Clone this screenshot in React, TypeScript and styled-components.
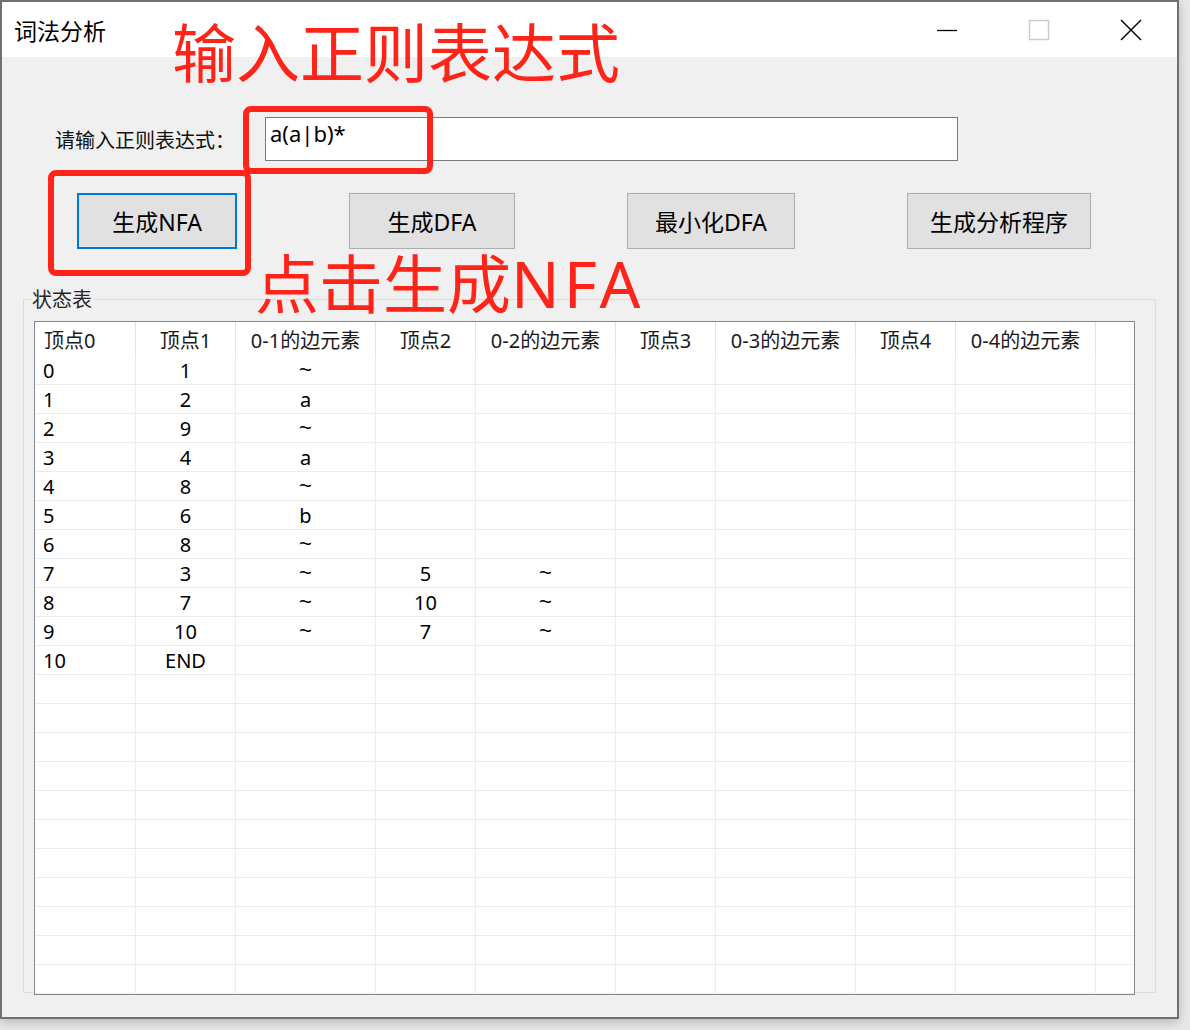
import React from 'react';
import styled, { createGlobalStyle } from 'styled-components';

const GlobalStyle = createGlobalStyle`
  html, body {
    margin: 0;
    padding: 0;
    background: #e8e8e8;
  }
  body {
    width: 1190px;
    height: 1030px;
    overflow: hidden;
    font-family: "Noto Sans", "Noto Sans CJK SC", sans-serif;
  }
`;

const RED = '#ff2318';

const Screen = styled.div`
  position: relative;
  width: 1190px;
  height: 1030px;
`;

const Window = styled.div`
  width: 1179px;
  height: 1019px;
  box-sizing: border-box;
  border: 2px solid #707070;
  background: #f0f0f0;
  display: flex;
  flex-direction: column;
  box-shadow: 0 3px 10px rgba(0, 0, 0, 0.22);
`;

const TitleBar = styled.div`
  height: 55px;
  flex-shrink: 0;
  background: #ffffff;
  display: flex;
  align-items: center;
`;

const Title = styled.div`
  flex: 1;
  padding-left: 12px;
  font-size: 23px;
  color: #000;
  font-family: "Noto Sans CJK SC", sans-serif;
`;

const CaptionButton = styled.div`
  width: 92px;
  height: 55px;
  display: flex;
  align-items: center;
  justify-content: center;
`;

const Body = styled.div`
  flex: 1;
  display: flex;
  flex-direction: column;
  padding: 60px 21px 0 21px;
`;

const FormRow = styled.div`
  display: flex;
  align-items: center;
  margin-left: 32px;
`;

const FieldLabel = styled.div`
  width: 210px;
  font-size: 20px;
  color: #111;
  font-family: "Noto Sans CJK SC", sans-serif;
`;

const TextBox = styled.div`
  width: 693px;
  height: 44px;
  box-sizing: border-box;
  border: 1px solid #7a7a7a;
  background: #ffffff;
  padding: 2px 4px;
  font-size: 22px;
  line-height: 27px;
  color: #000;
`;

const ButtonRow = styled.div`
  display: flex;
  gap: 112px;
  margin-top: 32px;
  margin-left: 54px;
`;

const WinButton = styled.div<{ $width: number; $focused?: boolean }>`
  width: ${(p) => p.$width}px;
  height: 56px;
  box-sizing: border-box;
  border: ${(p) => (p.$focused ? '2px solid #0078d7' : '1px solid #adadad')};
  background: #e1e1e1;
  display: flex;
  align-items: center;
  justify-content: center;
  font-size: 23px;
  color: #000;
`;

const GroupBox = styled.fieldset`
  margin: 40px 0 0 0;
  border: 1px solid #dcdcdc;
  padding: 12px 20px 0 10px;
  min-width: 0;
`;

const GroupLegend = styled.legend`
  font-size: 20px;
  line-height: 20px;
  padding: 0 1px;
  margin-left: -3px;
  color: #262626;
  font-family: "Noto Sans CJK SC", sans-serif;
`;

const Grid = styled.div`
  width: 1101px;
  box-sizing: border-box;
  border: 1px solid #828790;
  background: #ffffff;
  display: grid;
  grid-template-columns: 101px 100px 140px 100px 140px 100px 140px 100px 140px 1fr;
  margin-bottom: -3px;
`;

const HeadCell = styled.div<{ $align: 'left' | 'center'; $filler?: boolean }>`
  height: 34px;
  box-sizing: border-box;
  border-right: ${(p) => (p.$filler ? 'none' : '1px solid #e3e3e3')};
  display: flex;
  align-items: center;
  justify-content: ${(p) => (p.$align === 'left' ? 'flex-start' : 'center')};
  padding-left: ${(p) => (p.$align === 'left' ? '9px' : '0')};
  font-size: 20px;
  color: #1a1a1a;
  white-space: nowrap;
`;

const Cell = styled.div<{ $align: 'left' | 'center'; $filler?: boolean; $symbol?: boolean }>`
  height: 29px;
  box-sizing: border-box;
  border-right: ${(p) => (p.$filler ? 'none' : '1px solid #ececec')};
  border-bottom: 1px solid #ececec;
  display: flex;
  align-items: center;
  justify-content: ${(p) => (p.$align === 'left' ? 'flex-start' : 'center')};
  padding-left: ${(p) => (p.$align === 'left' ? '8px' : '0')};
  font-size: ${(p) => (p.$symbol ? '22px' : '20px')};
  font-family: ${(p) =>
    p.$symbol ? '"Liberation Sans", sans-serif' : '"Noto Sans", "Noto Sans CJK SC", sans-serif'};
  color: #000;
  white-space: nowrap;
`;

const AnnotationText = styled.div<{ $left: number; $top: number }>`
  position: absolute;
  left: ${(p) => p.$left}px;
  top: ${(p) => p.$top}px;
  font-size: 64px;
  line-height: 64px;
  color: ${RED};
  font-family: "Noto Sans", "Noto Sans CJK SC", sans-serif;
  white-space: nowrap;
`;

const LatinPart = styled.span`
  letter-spacing: 4px;
`;

const AnnotationBox = styled.div<{ $left: number; $top: number; $w: number; $h: number }>`
  position: absolute;
  left: ${(p) => p.$left}px;
  top: ${(p) => p.$top}px;
  width: ${(p) => p.$w}px;
  height: ${(p) => p.$h}px;
  box-sizing: border-box;
  border: 6px solid ${RED};
  border-radius: 8px;
`;

const headers = [
  '顶点0',
  '顶点1',
  '0-1的边元素',
  '顶点2',
  '0-2的边元素',
  '顶点3',
  '0-3的边元素',
  '顶点4',
  '0-4的边元素',
];

const data: string[][] = [
  ['0', '1', '~'],
  ['1', '2', 'a'],
  ['2', '9', '~'],
  ['3', '4', 'a'],
  ['4', '8', '~'],
  ['5', '6', 'b'],
  ['6', '8', '~'],
  ['7', '3', '~', '5', '~'],
  ['8', '7', '~', '10', '~'],
  ['9', '10', '~', '7', '~'],
  ['10', 'END'],
];

const ROWS = 22;

const MinimizeIcon = () => (
  <svg width="20" height="20" viewBox="0 0 20 20">
    <line x1="0" y1="10.5" x2="20" y2="10.5" stroke="#000" strokeWidth="1.3" />
  </svg>
);

const MaximizeIcon = () => (
  <svg width="22" height="22" viewBox="0 0 22 22">
    <rect x="1.5" y="1.5" width="19" height="19" fill="none" stroke="#cccccc" strokeWidth="1.5" />
  </svg>
);

const CloseIcon = () => (
  <svg width="22" height="22" viewBox="0 0 22 22">
    <line x1="1" y1="1" x2="21" y2="21" stroke="#000" strokeWidth="1.4" />
    <line x1="21" y1="1" x2="1" y2="21" stroke="#000" strokeWidth="1.4" />
  </svg>
);

export default function App() {
  const rows = Array.from({ length: ROWS }, (_, i) => data[i] || []);
  return (
    <Screen>
      <GlobalStyle />
      <Window>
        <TitleBar>
          <Title>词法分析</Title>
          <CaptionButton>
            <MinimizeIcon />
          </CaptionButton>
          <CaptionButton>
            <MaximizeIcon />
          </CaptionButton>
          <CaptionButton>
            <CloseIcon />
          </CaptionButton>
        </TitleBar>
        <Body>
          <FormRow>
            <FieldLabel>请输入正则表达式：</FieldLabel>
            <TextBox>a(a|b)*</TextBox>
          </FormRow>
          <ButtonRow>
            <WinButton $width={160} $focused>
              生成NFA
            </WinButton>
            <WinButton $width={166}>生成DFA</WinButton>
            <WinButton $width={168}>最小化DFA</WinButton>
            <WinButton $width={184}>生成分析程序</WinButton>
          </ButtonRow>
          <GroupBox>
            <GroupLegend>状态表</GroupLegend>
            <Grid>
              {headers.map((h, i) => (
                <HeadCell key={`h${i}`} $align={i === 0 ? 'left' : 'center'}>
                  {h}
                </HeadCell>
              ))}
              <HeadCell $align="center" $filler />
              {rows.map((r, ri) => (
                <React.Fragment key={`r${ri}`}>
                  {headers.map((_, ci) => {
                    const v = r[ci] || '';
                    return (
                      <Cell
                        key={`c${ri}-${ci}`}
                        $align={ci === 0 ? 'left' : 'center'}
                        $symbol={v === '~'}
                      >
                        {v}
                      </Cell>
                    );
                  })}
                  <Cell $align="center" $filler />
                </React.Fragment>
              ))}
            </Grid>
          </GroupBox>
        </Body>
      </Window>
      <AnnotationText $left={172} $top={21}>
        输入正则表达式
      </AnnotationText>
      <AnnotationText $left={255} $top={252}>
        点击生成<LatinPart>NFA</LatinPart>
      </AnnotationText>
      <AnnotationBox $left={243} $top={106} $w={190} $h={68} />
      <AnnotationBox $left={48} $top={170} $w={203} $h={106} />
    </Screen>
  );
}
